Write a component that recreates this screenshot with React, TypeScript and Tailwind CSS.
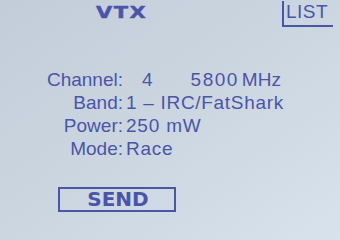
import React from "react";

export default function App() {
  return (
    <div className="w-[340px] h-[240px] overflow-hidden bg-gradient-to-br from-[#c3cdd9] via-[#cbd6e1] to-[#d7e2ec] text-[#4a55a8] font-['Liberation_Sans',Arial,sans-serif]">
      <div className="flex items-start h-[27px]">
        <div className="ml-[96px] mt-[4px] font-['DejaVu_Sans',sans-serif] font-black text-[15px] leading-[18px] tracking-[1px] inline-block origin-left scale-x-[1.4] [-webkit-text-stroke:0.4px_#4a55a8]">
          VTX
        </div>
        <div className="ml-auto mr-[7px] mt-[1px] border-l-2 border-b-2 border-[#4a55a8] pl-[2px] pr-[5px] pb-[2px] text-[19px] leading-[22px] tracking-[0.5px]">
          LIST
        </div>
      </div>
      <div className="mt-[41px] grid grid-cols-[123px_1fr] gap-x-[3px] text-[19px] leading-[23px]">
        <div className="text-right">Channel:</div>
        <div className="flex">
          <span className="ml-[16px]">4</span>
          <span className="ml-[38px] tracking-[1.5px]">5800</span>
          <span className="ml-[3px]">MHz</span>
        </div>
        <div className="text-right">Band:</div>
        <div className="tracking-[0.7px]">1 – IRC/FatShark</div>
        <div className="text-right">Power:</div>
        <div className="tracking-[0.8px]">250 mW</div>
        <div className="text-right">Mode:</div>
        <div className="tracking-[0.7px]">Race</div>
      </div>
      <div className="ml-[58px] mt-[27px] w-[118px] h-[25px] border-2 border-[#4a55a8] flex items-center justify-center">
        <span className="font-['DejaVu_Sans',sans-serif] font-bold text-[20px] leading-[21px] ml-[2px]">
          SEND
        </span>
      </div>
    </div>
  );
}
